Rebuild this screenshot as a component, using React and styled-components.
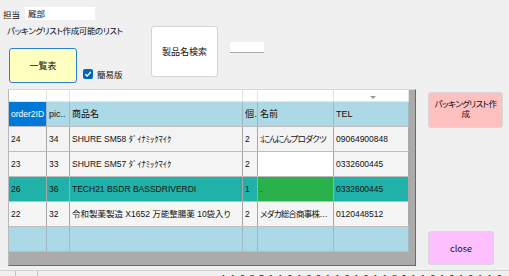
import React from 'react'
import styled, { createGlobalStyle } from 'styled-components'

const Global = createGlobalStyle`
  html, body {
    margin: 0;
    padding: 0;
    background: #f0f0f0;
  }
  #root {
    width: 509px;
    height: 276px;
    overflow: hidden;
  }
`

const Page = styled.div`
  width: 509px;
  height: 276px;
  background: #f0f0f0;
  font-family: "Liberation Sans", "Noto Sans CJK JP", sans-serif;
  font-feature-settings: "palt";
  color: #111;
  display: flex;
  flex-direction: column;
  overflow: hidden;
  & > * {
    flex-shrink: 0;
  }
`

const Top = styled.div`
  height: 89px;
  display: flex;
`

const LeftCol = styled.div`
  width: 151px;
  display: flex;
  flex-direction: column;
`

const OwnerRow = styled.div`
  display: flex;
  align-items: center;
  margin: 7px 0 0 3px;
  height: 13px;
`

const Label = styled.span`
  font-size: 8.5px;
  line-height: 10px;
  width: 22px;
  font-family: "Noto Sans CJK JP", sans-serif;
`

const TextBox = styled.div`
  width: ${p => p.$w}px;
  height: ${p => p.$h}px;
  background: #fff;
  font-size: 8.5px;
  line-height: ${p => p.$h}px;
  padding-left: 3px;
  box-sizing: border-box;
  font-family: "Noto Sans CJK JP", sans-serif;
  border-bottom: ${p => (p.$shadow ? '1px solid #a8a8a8' : 'none')};
  margin-top: ${p => p.$top || 0}px;
  margin-left: ${p => p.$left || 0}px;
`

const Caption = styled.div`
  margin: 5px 0 0 7px;
  font-size: 8.5px;
  line-height: 10px;
  letter-spacing: -0.4px;
  white-space: nowrap;
  font-family: "Noto Sans CJK JP", sans-serif;
`

const ButtonRow = styled.div`
  display: flex;
  align-items: flex-end;
  margin: 13px 0 0 9px;
`

const FormButton = styled.button`
  width: ${p => p.$w}px;
  height: ${p => p.$h}px;
  margin-top: ${p => p.$top || 0}px;
  background: ${p => p.$bg};
  border: 1px solid ${p => p.$border || '#d0d0d0'};
  border-radius: 3px;
  padding: 0 3px;
  font-family: "Noto Sans CJK JP", sans-serif;
  font-feature-settings: "palt";
  font-size: ${p => p.$fs || 9}px;
  line-height: ${p => p.$lh || 11}px;
  letter-spacing: ${p => p.$ls || 0}px;
  color: #111;
  box-sizing: border-box;
  display: flex;
  align-items: ${p => p.$align || 'center'};
  justify-content: center;
  text-align: center;
  word-break: break-all;
  padding-top: ${p => p.$pt || 0}px;
  flex-shrink: 0;
`

const CheckWrap = styled.label`
  display: flex;
  align-items: center;
  gap: 4px;
  margin: 0 0 4px 6px;
  font-size: 8.5px;
  line-height: 10px;
  font-family: "Noto Sans CJK JP", sans-serif;
`

const CheckBox = styled.span`
  width: 10px;
  height: 10px;
  border-radius: 2px;
  background: #0067c0;
  display: flex;
  align-items: center;
  justify-content: center;
`

const Main = styled.div`
  display: flex;
  height: 181px;
`

const Grid = styled.div`
  margin-left: 8px;
  width: 408px;
  height: 177px;
  box-sizing: border-box;
  border: 1px solid;
  border-color: #d8d8d8 #6a6a6a #6a6a6a #b8b8b8;
  background: #ababab;
  overflow: hidden;
`

const Row = styled.div`
  display: grid;
  grid-template-columns: 38px 23px 173px 15px 76px 75px;
  height: ${p => p.$h || 24}px;
  border-bottom: 1px solid ${p => p.$line || '#bdbdbd'};
  width: 400px;
`

const Cell = styled.div`
  background: ${p => p.$bg || '#f4f4f4'};
  color: ${p => p.$fg || '#111'};
  border-right: 1px solid ${p => p.$line || '#a7a7a7'};
  font-size: ${p => p.$fs || 8.5}px;
  line-height: ${p => p.$h || 24}px;
  letter-spacing: ${p => (p.$tight ? '-0.8px' : '0')};
  padding-left: 2px;
  white-space: nowrap;
  overflow: hidden;
  text-overflow: ellipsis;
  position: relative;
  min-width: 0;
`

const Arrow = styled.span`
  position: absolute;
  right: 32px;
  top: 6px;
  width: 0;
  height: 0;
  border-left: 3.5px solid transparent;
  border-right: 3.5px solid transparent;
  border-top: 3px solid #9a9a9a;
`

const SideCol = styled.div`
  margin-left: 12px;
  padding: 3px 0 0;
  display: flex;
  flex-direction: column;
  justify-content: space-between;
  height: 176px;
  box-sizing: border-box;
`

const Footer = styled.div`
  border-top: 1px solid #d2d2d2;
  display: grid;
  grid-template-columns: 15px 22px 1fr;
  height: 6px;
`

const FooterCell = styled.div`
  border-left: ${p => (p.$first ? 'none' : '1px solid #c4c4c4')};
  font-size: 9px;
  line-height: 10px;
  padding: 2px 0 0 ${p => p.$pad || 0}px;
  white-space: nowrap;
  overflow: hidden;
  letter-spacing: 1px;
  color: #222;
`

const columns = ['order2ID', 'pic..', '商品名', '個..', '名前', 'TEL']

const rows = [
  { cells: ['24', '34', 'SHURE SM58 ﾀﾞｲﾅﾐｯｸﾏｲｸ', '2', ':にんにんプロダクツ', '09064900848'], bg: '#f3f3f3' },
  { cells: ['23', '33', 'SHURE SM57 ﾀﾞｲﾅﾐｯｸﾏｲｸ', '2', '', '0332600445'], bg: '#f5f5f5', nameBg: '#ffffff' },
  { cells: ['26', '36', 'TECH21 BSDR BASSDRIVERDI', '1', '.', '0332600445'], bg: '#20b2a8', nameBg: '#2bb14c' },
  { cells: ['22', '32', '令和製薬製造 X1652 万能整腸薬 10袋入り', '2', 'メダカ総合商事株式会社', '0120448512'], bg: '#f5f5f5' },
]

const Check = () => (
  <svg width="8" height="8" viewBox="0 0 8 8">
    <path d="M1.3 4.2 L3.2 6 L6.8 2" fill="none" stroke="#fff" strokeWidth="1.3" />
  </svg>
)

export default function App() {
  return (
    <Page>
      <Global />
      <Top>
        <LeftCol>
          <OwnerRow>
            <Label>担当</Label>
            <TextBox $w={70} $h={13}>厩部</TextBox>
          </OwnerRow>
          <Caption>パッキングリスト作成可能のリスト</Caption>
          <ButtonRow>
            <FormButton $w={68} $h={35} $bg="#ffffc0" $border="#2a7fd4">一覧表</FormButton>
            <CheckWrap>
              <CheckBox><Check /></CheckBox>
              簡易版
            </CheckWrap>
          </ButtonRow>
        </LeftCol>
        <FormButton $w={67} $h={51} $top={26} $bg="#ffffff" $border="#d4d4d4">製品名検索</FormButton>
        <TextBox $w={34} $h={11} $top={42} $left={12} $shadow />
      </Top>
      <Main>
        <Grid>
          <Row $h={11} $line="#e4e4e4">
            {columns.map((c, i) => (
              <Cell key={i} $bg="#ffffff" $h={11} $line="#e4e4e4">
                {i === 5 && <Arrow />}
              </Cell>
            ))}
          </Row>
          <Row $h={24}>
            {columns.map((c, i) => (
              <Cell
                key={i}
                $bg={i === 0 ? '#0078d7' : '#add8e6'}
                $fg={i === 0 ? '#ffffff' : '#111'}
                $fs={i === 0 ? 8.5 : 9}
                $line="#9fb9c2"
              >
                {c}
              </Cell>
            ))}
          </Row>
          {rows.map((r, ri) => (
            <Row key={ri}>
              {r.cells.map((c, ci) => (
                <Cell key={ci} $tight={ci === 4} $bg={ci === 4 && r.nameBg ? r.nameBg : r.bg}>
                  {c}
                </Cell>
              ))}
            </Row>
          ))}
          <Row>
            {columns.map((c, i) => (
              <Cell key={i} $bg="#add8e6" $line="#9fb9c2" />
            ))}
          </Row>
        </Grid>
        <SideCol>
          <FormButton $w={75} $h={36} $bg="#ffc0c0" $border="#d8d8d8" $fs={8.5} $lh={10} $ls={-0.6} $align="flex-start" $pt={5}>
            パッキングリスト作成
          </FormButton>
          <FormButton $w={66} $h={34} $bg="#ffc0ff" $border="#d8d8d8" $fs={9}>close</FormButton>
        </SideCol>
      </Main>
      <Footer>
        <FooterCell $first />
        <FooterCell />
        <FooterCell $pad={183}>1 1 0 8 5 1 1 0 1 0 0 1 1 0 1 0 1 1 8 0 1 1 0 1 0 1 0 1 1 0</FooterCell>
      </Footer>
    </Page>
  )
}
